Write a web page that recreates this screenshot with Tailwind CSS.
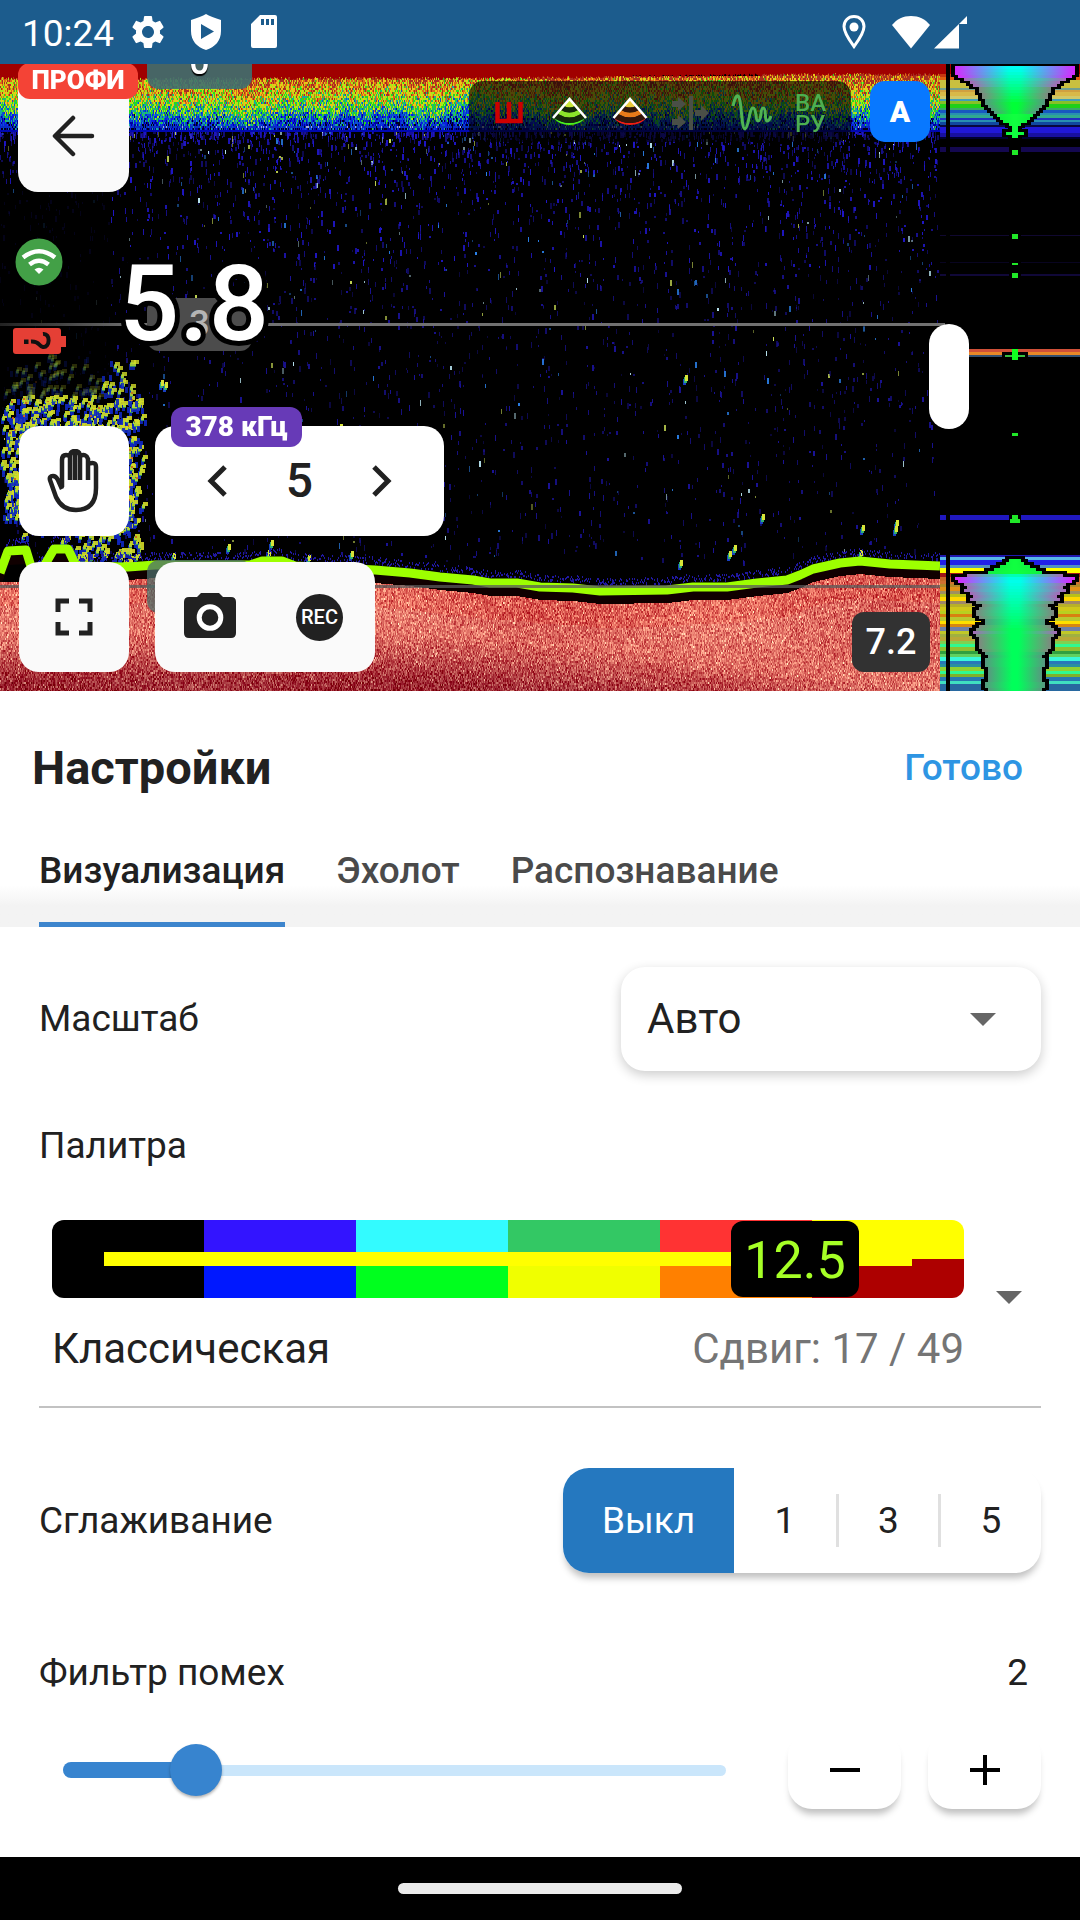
<!DOCTYPE html>
<html lang="ru">
<head>
<meta charset="utf-8">
<meta name="viewport" content="width=device-width, initial-scale=1">
<title>Настройки эхолота</title>
<script src="https://cdn.jsdelivr.net/npm/@tailwindcss/browser@4"></script>
</head>
<body class="flex min-h-screen flex-col bg-white font-['Roboto',sans-serif] text-[#212121]">

<header class="flex h-16 items-center justify-between bg-[#1c5c8d] pt-0 pr-[112px] pl-[22px] text-white">
  <div class="flex items-center">
    <span class="pt-1 text-[37px] leading-15">10:24</span>
    <svg class="ml-[14px] size-[40px]" viewBox="0 0 24 24" fill="currentColor"><path d="M19.14 12.94c.04-.3.06-.61.06-.94 0-.32-.02-.64-.07-.94l2.03-1.58a.49.49 0 0 0 .12-.61l-1.92-3.32a.488.488 0 0 0-.59-.22l-2.39.96c-.5-.38-1.03-.7-1.62-.94l-.36-2.54a.484.484 0 0 0-.48-.41h-3.84c-.24 0-.43.17-.47.41l-.36 2.54c-.59.24-1.13.57-1.62.94l-2.39-.96c-.22-.08-.47 0-.59.22L2.74 8.87c-.12.21-.08.47.12.61l2.03 1.58c-.05.3-.09.63-.09.94s.02.64.07.94l-2.03 1.58a.49.49 0 0 0-.12.61l1.92 3.32c.12.22.37.29.59.22l2.39-.96c.5.38 1.03.7 1.62.94l.36 2.54c.05.24.24.41.48.41h3.84c.24 0 .44-.17.47-.41l.36-2.54c.59-.24 1.13-.56 1.62-.94l2.39.96c.22.08.47 0 .59-.22l1.92-3.32c.12-.22.07-.47-.12-.61zM12 15.6A3.61 3.61 0 0 1 8.400 12c0-1.980 1.620-3.600 3.600-3.600s3.600 1.620 3.600 3.600-1.620 3.600-3.600 3.600z"/></svg>
    <svg class="ml-[22px] h-[36px] w-[32px]" viewBox="0 0 32 36" fill="currentColor" fill-rule="evenodd"><path d="M16 0C19 2 25 4 31 6V17C31 27 25 33 16 36 7 33 1 27 1 17V6C7 4 13 2 16 0ZM11 10V25L24 17.500Z"/></svg>
    <svg class="ml-[28px] h-[34px] w-[28px]" viewBox="0 0 28 34" fill="currentColor" fill-rule="evenodd"><path d="M10 0H25Q27 0 27 2V31Q27 33 25 33H3Q1 33 1 31V9ZM11 4V10H14V4ZM16 4V10H19V4ZM21 4V10H24V4Z"/></svg>
  </div>
  <div class="flex items-center">
    <svg class="h-[34px] w-[24px]" viewBox="0 0 24 34" fill="none"><path d="M12 1.500C6 1.500 2 6 2 11.500 2 18 8 26 12 31.500 16 26 22 18 22 11.500 22 6 18 1.500 12 1.500Z" stroke="#fff" stroke-width="3"/><circle cx="12" cy="12" r="4.500" fill="#fff"/></svg>
    <svg class="ml-[25px] h-[34px] w-[40px]" viewBox="0 0 40 34" fill="currentColor"><path d="M20 33.500 1 10C6 4 12 1 20 1S34 4 39 10Z"/></svg>
    <svg class="ml-[3px] h-[34px] w-[34px]" viewBox="0 0 34 34" fill="currentColor"><path d="M0 33.500 25 9V33.500ZM25 9 33 1V9Z"/></svg>
  </div>
</header>

<section class="relative h-[627px] overflow-hidden bg-black" aria-label="Эхограмма">
  <canvas id="sonar" class="block h-full w-full" width="1080" height="627"></canvas>

  <div class="absolute -top-7 left-[147px] h-[53px] w-[105px] rounded-xl bg-[#3d7070]/90 text-center text-4xl leading-[53px] text-white [text-shadow:0_2px_1px_#000]"><span class="font-medium">0</span></div>
  <div class="absolute top-[234px] left-[147px] h-[53px] w-[105px] rounded-xl bg-[#4c4c4c] text-center text-4xl leading-[53px] font-medium text-[#b5b5b5]">3</div>

  <button class="absolute top-0 left-[18px] flex h-32 w-[111px] items-center justify-center rounded-[20px] bg-[#fafafa] pt-4" aria-label="Назад">
    <svg class="h-11 w-11" viewBox="0 0 44 44" fill="none" stroke="#212121" stroke-width="4.500" stroke-linecap="round" stroke-linejoin="round"><path d="M40 22H4M21 4 3 22l18 18"/></svg>
  </button>
  <span class="absolute -top-px left-[18px] flex h-9 w-30 items-center justify-center rounded-xl bg-[#f44336] pb-0.5 text-[26px] leading-9 font-black text-white">ПРОФИ</span>

  <svg class="absolute top-[174px] left-[15px] size-12" viewBox="0 0 48 48"><circle cx="24" cy="24" r="23.500" fill="#43a047"/><g fill="none" stroke="#fff" stroke-width="4.500"><path d="M8 19.500Q24 7 40 19.500M14.500 26.500Q24 19 33.500 26.500"/></g><path d="M24 36 19.500 31.500Q24 28 28.500 31.500Z" fill="#fff"/></svg>
  <svg class="absolute top-[264px] left-[12px] h-7 w-[54px]" viewBox="0 0 54 28"><path d="M4 0H46Q49 0 49 3V8H54V19H49V23Q49 26 46 26H4Q1 26 1 23V3Q1 0 4 0Z" fill="#e53f35"/><path d="M31 6C39 5 38 20 31 19 26 18 28 13 19 13.500" fill="none" stroke="#111" stroke-width="4"/><path d="M12 11.500h4.500v4.500h-4.500z" fill="#111"/></svg>

  <div class="absolute top-[184px] left-[119px] text-[106px] leading-[112px] font-medium text-white [-webkit-text-stroke:10px_#000] [paint-order:stroke_fill]">5.8</div>

  <button class="absolute top-[362px] left-[19px] flex size-[110px] items-center justify-center rounded-[20px] bg-white" aria-label="Пауза прокрутки">
    <svg class="size-16" viewBox="0 0 64 64" fill="none" stroke="#212121" stroke-width="4.500" stroke-linejoin="round" stroke-linecap="butt"><path d="M20 38V11Q20 6 24 6 27 6 28 8V31M28 8Q28 2 33 2 38 2 38 8V31M33 3V31M38 7Q44 4 46 10V31M46 15Q54 12 54 18V39Q54 61 34 61 20 61 14 48L8 31Q7 27 11 27 14 27 16 31L20 40"/></svg>
  </button>
  <div class="absolute top-[362px] left-[155px] flex h-[110px] w-[289px] items-center justify-between rounded-[20px] bg-white px-[48px]">
    <button aria-label="Предыдущий"><svg class="h-8 w-7" viewBox="0 0 28 32" fill="none" stroke="#212121" stroke-width="5"><path d="M22 2 8 16 22 30"/></svg></button>
    <span class="text-5xl font-medium">5</span>
    <button aria-label="Следующий"><svg class="h-8 w-7" viewBox="0 0 28 32" fill="none" stroke="#212121" stroke-width="5"><path d="M6 2 20 16 6 30"/></svg></button>
  </div>
  <span class="absolute top-[343px] left-[171px] flex h-10 w-[131px] items-center justify-center rounded-xl bg-[#673ab7] text-[28px] leading-10 font-black text-white">378 кГц</span>

  <button class="absolute top-[498px] left-[19px] flex size-[110px] items-center justify-center rounded-[20px] bg-[#fafafa]" aria-label="Во весь экран">
    <svg class="size-[38px]" viewBox="0 0 38 38" fill="none" stroke="#212121" stroke-width="5"><path d="M3 14V3H14M24 3H35V14M35 24V35H24M14 35H3V24"/></svg>
  </button>
  <div class="absolute top-[498px] left-[155px] flex h-[110px] w-[220px] items-center justify-between rounded-[20px] bg-[#fafafa] pr-8 pl-7">
    <button aria-label="Снимок"><svg class="h-12 w-[54px]" viewBox="0 2 54 48"><path d="M6 6H14L19 1H35L40 6H48Q53 6 53 11V42Q53 47 48 47H6Q1 47 1 42V11Q1 6 6 6Z" fill="#212121"/><circle cx="27" cy="26.500" r="10.800" fill="none" stroke="#fff" stroke-width="5"/></svg></button>
    <button class="flex size-[47px] items-center justify-center rounded-full bg-[#212121] text-xl font-medium text-white">REC</button>
  </div>

  <div class="absolute top-[17px] right-[229px] h-[61px] w-[382px] rounded-[14px] bg-black/65">
    <svg class="h-full w-full" viewBox="0 0 382 61" fill="none">
      <path d="M28.500 21V40H51.500V21M40 21V40" stroke="#cc0000" stroke-width="4.500"/>
      <path d="M100.500 18 95 25Q100.500 28 106 25Z" fill="#c8e53a"/><path d="M92 29Q100.500 34 109 29L112 33Q100.500 40 89 33Z" fill="#8be52a"/><path d="M85 37Q100.500 47 116 37 111 44 100.500 44 90 44 85 37Z" fill="#4bf01d"/>
      <path d="M95 25Q100.500 28 106 25L109 29Q100.500 34 92 29ZM89 33Q100.500 40 112 33L116 37Q100.500 47 85 37Z" fill="#14280a"/>
      <path d="M84 37 100.500 18 117 37" stroke="#fff" stroke-width="2.500"/>
      <path d="M161 18 155 25Q161 28 167 25Z" fill="#e8c83a"/><path d="M152 29Q161 34 170 29L173 33Q161 40 149 33Z" fill="#e87a1a"/><path d="M145 37Q161 47 177 37 172 44 161 44 150 44 145 37Z" fill="#f01e12"/>
      <path d="M155 25Q161 28 167 25L170 29Q161 34 152 29ZM149 33Q161 40 173 33L177 37Q161 47 145 37Z" fill="#33150a"/>
      <path d="M144.500 37 161 18 177.500 37" stroke="#fff" stroke-width="2.500"/>
      <path d="M220 15h4v34h-4zM203 20h6v-4l8 7-8 7v-4h-6zM203 38h6v-4l8 7-8 7v-4h-6zM226 29h6v-5l8 8-8 8v-5h-6z" fill="#4a4f47"/>
      <path d="M264 25C266 16 269 10 271 20 273 32 273 48 276 48 280 47 280 27 284 27 288 27 286 40 289 40 293 40 291 27 294 27 298 27 295 39 298 40 300 40 301 38 302 35" stroke="#4fb353" stroke-width="3"/>
    </svg>
    <div class="absolute top-[12px] left-[326px] text-2xl leading-[21px] font-medium text-[#4caf50]"><p>ВА</p><p>РУ</p></div>
  </div>
  <button class="absolute top-[17px] right-[150px] h-[61px] w-[60px] rounded-[15px] bg-[#0878ff] text-3xl font-black text-white">A</button>
  <button class="absolute top-[260px] right-[111px] h-[105px] w-10 rounded-full bg-white" aria-label="Изменить ширину панели"></button>
  <div class="absolute right-[150px] bottom-[19px] h-[60px] w-[78px] rounded-xl bg-[#323232] text-center text-4xl leading-[60px] font-medium text-white">7.2</div>
</section>

<main class="flex grow flex-col">
  <div class="flex h-[152px] items-center justify-between pt-0.5 pr-[57px] pl-8">
    <h1 class="text-[47px] font-bold">Настройки</h1>
    <button class="text-[37px] font-medium text-[#2e95e3]">Готово</button>
  </div>
  <div role="tablist" class="flex h-[84px] gap-[51px] bg-linear-to-b from-white from-50% to-[#f3f3f3] to-75% px-[39px] text-[37px] leading-[56px] font-medium">
    <button role="tab" aria-selected="true" class="flex items-start border-b-5 border-[#3d85cd]">Визуализация</button>
    <button role="tab" aria-selected="false" class="flex items-start text-[#4a4a4a]">Эхолот</button>
    <button role="tab" aria-selected="false" class="flex items-start text-[#4a4a4a]">Распознавание</button>
  </div>

  <form class="flex flex-col px-[39px] pt-10 pb-12 text-[37px] leading-[50px]">
    <div class="flex items-center justify-between">
      <label for="scale">Масштаб</label>
      <div class="relative">
        <select id="scale" class="block h-[104px] w-[420px] appearance-none rounded-3xl bg-white pr-16 pl-[26px] text-[42px] shadow-[0_4px_12px_rgba(0,0,0,0.2)]"><option>Авто</option></select>
        <svg class="pointer-events-none absolute top-[46px] right-[45px] h-[13px] w-[26px]" viewBox="0 0 26 13" fill="#666"><path d="M0 0H26L13 13Z"/></svg>
      </div>
    </div>

    <p id="palette-label" class="mt-[50px]">Палитра</p>
    <button type="button" aria-labelledby="palette-label palette-name" class="mt-[49px] flex items-center gap-8 border-b-2 border-[#c2c2c2] pr-[19px] pb-8 pl-[13px] text-left">
      <span class="grow">
        <span class="relative block">
          <span class="grid h-[78px] grid-cols-6 grid-rows-2 overflow-hidden rounded-xl">
            <span class="bg-black"></span><span class="bg-[#3314ff]"></span><span class="bg-[#33fbff]"></span><span class="bg-[#33c864]"></span><span class="bg-[#ff3333]"></span><span class="bg-[#ffff00]"></span>
            <span class="bg-black"></span><span class="bg-[#0018ff]"></span><span class="bg-[#00ff1e]"></span><span class="bg-[#f0ff00]"></span><span class="bg-[#ff8000]"></span><span class="bg-[#ad0000]"></span>
          </span>
          <span class="absolute top-8 right-[52px] left-[52px] h-[14px] bg-[#ffff00]"></span>
          <span class="absolute top-px right-[105px] h-[76px] w-32 rounded-xl bg-black text-center text-[52px] leading-[80px] text-[#a6ff26]">12.5</span>
        </span>
        <span class="mt-[26px] flex justify-between text-[42px] leading-[50px]"><span id="palette-name">Классическая</span><span class="text-[#757575]">Сдвиг: 17 / 49</span></span>
      </span>
      <svg class="h-[13px] w-[26px] shrink-0" viewBox="0 0 26 13" fill="#666"><path d="M0 0H26L13 13Z"/></svg>
    </button>

    <div role="radiogroup" aria-labelledby="smooth-label" class="mt-[60px] flex items-center justify-between">
      <span id="smooth-label">Сглаживание</span>
      <div class="flex h-[105px] items-center overflow-hidden rounded-[26px] bg-white text-center shadow-[0_7px_7px_-2px_rgba(0,0,0,0.25)]">
        <label class="w-[171px] leading-[106px] text-white has-checked:bg-[#2578bf]"><input class="sr-only" type="radio" name="smooth" checked>Выкл</label>
        <label class="w-[102px]"><input class="sr-only" type="radio" name="smooth">1</label>
        <label class="w-[105px] border-x-3 border-[#e0e0e0] leading-[53px]"><input class="sr-only" type="radio" name="smooth">3</label>
        <label class="w-[100px]"><input class="sr-only" type="radio" name="smooth">5</label>
      </div>
    </div>

    <div class="mt-[75px] flex justify-between pr-[13px]">
      <label for="noise">Фильтр помех</label>
      <output for="noise">2</output>
    </div>
    <div class="mt-[33px] flex items-center">
      <div class="relative mr-9 -ml-0.5 flex h-[78px] grow items-center">
        <div class="absolute right-[26px] left-[26px] h-[11px] rounded-full bg-[#cae6fb]"></div>
        <div class="absolute left-[26px] h-4 w-1/5 rounded-full bg-[#3784cf]"></div>
        <input id="noise" type="range" min="0" max="10" value="2" class="relative h-[52px] w-full appearance-none bg-transparent [&::-webkit-slider-thumb]:size-[52px] [&::-webkit-slider-thumb]:appearance-none [&::-webkit-slider-thumb]:rounded-full [&::-webkit-slider-thumb]:bg-[#3784cf] [&::-webkit-slider-thumb]:shadow-[0_2px_3px_rgba(0,0,0,0.3)]">
      </div>
      <button type="button" aria-label="Уменьшить" class="flex h-[78px] w-[113px] items-center justify-center rounded-3xl bg-white shadow-[0_8px_7px_-3px_rgba(0,0,0,0.25)]"><svg class="size-[30px]" viewBox="0 0 30 30" stroke="#000" stroke-width="4"><path d="M0 15H30"/></svg></button>
      <button type="button" aria-label="Увеличить" class="ml-[27px] flex h-[78px] w-[113px] items-center justify-center rounded-3xl bg-white shadow-[0_8px_7px_-3px_rgba(0,0,0,0.25)]"><svg class="size-[30px]" viewBox="0 0 30 30" stroke="#000" stroke-width="4"><path d="M0 15H30M15 0V30"/></svg></button>
    </div>
  </form>
</main>

<footer class="flex h-[63px] items-center justify-center bg-black"><div class="h-[11px] w-[284px] rounded-full bg-[#ebebeb]"></div></footer>

<script>
const ctx = document.getElementById('sonar').getContext('2d');
ctx.translate(0, -64);
let seed = 12345;
const rnd = () => { seed = (seed * 1664525 + 1013904223) >>> 0; return seed / 4294967296; };
const rect = (c, x, y, w, h) => { ctx.fillStyle = c; ctx.fillRect(x, y, w, h); };
const lerp = (pts, v) => {
  for (let i = 1; i < pts.length; i++) if (v <= pts[i][0]) {
    const [a, b] = pts[i - 1], [c, d] = pts[i];
    return b + (d - b) * (v - a) / (c - a || 1);
  }
  return pts[pts.length - 1][1];
};
rect('#000', 0, 64, 1080, 627);

// Surface clutter: dark red through yellow and green down to blue
const ramp = ['#00001c', '#0000a0', '#0a20e0', '#0a50d0', '#18a8a0', '#28d820', '#a8e818', '#e8c818', '#e06818', '#a83020'];
let env = 0;
for (let x = 0; x < 940; x++) {
  if (x % 5 === 0) env = env * 0.7 + (rnd() - 0.5) * 8;
  const top = x < 500 ? 77 : 77 - Math.min(1, (x - 500) / 300) * 4;
  for (let y = 76 - (x > 760 ? 4 : 0); y < 132; y += 2) {
    const mean = lerp([[74, 8.6], [88, 7.4], [100, 6], [110, 4.8], [118, 3], [126, 1.8], [132, 0.8]], y - env);
    const v = Math.max(0, Math.min(9, Math.round(mean + (rnd() + rnd() - 1) * 3.4)));
    rect(ramp[v], x, y, 1, 2);
  }
  if (rnd() < 0.8) rect(rnd() < 0.12 ? '#a0a8d8' : '#0830c0', x, 126, 1, 2);
  rect('#0008b0', x, 130, 1, 2);
  rect('#a00000', x, 64, 1, top - 64 + rnd() * 3);
}
// Suspended speckles that thin out with depth
for (let i = 0; i < 4200; i++) {
  const x = rnd() * 938, y = 132 + Math.pow(rnd(), 2.4) * 430;
  const near = y < 270;
  ctx.globalAlpha = x < 110 && y > 190 && y < 410 ? 0.12 : 0.35 + rnd() * 0.65;
  const r = rnd();
  rect(r < 0.91 ? (near ? '#2016c8' : '#1a1298') : r < 0.955 ? '#2a80e8' : r < 0.98 ? '#b8e4f0' : '#d0e458', x | 0, y | 0, rnd() < 0.35 ? 2 : 1, 2 + (rnd() * 5 | 0));
}
ctx.globalAlpha = 1;
// Dense cloud along the left edge
for (let i = 0; i < 1500; i++) {
  const x = rnd() * 132 + rnd() * 14, y = 345 + rnd() * 217;
  if (x < 75 && y > 515 && rnd() < 0.8) continue;
  if (y > 520 && rnd() < 0.5) continue;
  if (y < 405 && rnd() > (y - 345) / 75) continue;
  ctx.globalAlpha = y < 395 ? (x > 100 ? 0.8 : 0.2) : 0.9;
  rect('#1028c0', (x | 0) - 1, (y | 0) + 4, 3, 6);
  if (rnd() < 0.6) { rect('#38a060', x | 0, (y | 0) + 2, 3, 5); rect('#d4dc28', (x | 0) + 1, y | 0, 5, 4); rect('#b8d830', x | 0, (y | 0) + 3, 3, 3); }
  if (rnd() < 0.08) rect('#d06018', (x | 0) + 1, (y | 0) + 2, 2, 2);
}
ctx.globalAlpha = 1;
[[685, 375], [762, 514], [734, 545], [729, 551], [680, 560], [862, 525], [860, 550], [896, 520], [895, 526], [340, 424], [271, 540], [268, 550], [228, 544], [173, 553], [308, 555], [351, 551], [161, 380], [165, 382]].forEach(([x, y]) => {
  rect('#1840c0', x - 2, y + 4, 3, 6); rect('#30b070', x - 1, y + 2, 3, 6); rect('#d8e438', x, y, 3, 6);
});

// Bottom profile
const bed = [[0, 573], [8, 551], [26, 550], [33, 573], [44, 566], [54, 549], [68, 549], [76, 566], [128, 567], [155, 565], [250, 565], [262, 561], [282, 561], [295, 566], [375, 570], [410, 573], [440, 577], [473, 580], [490, 583], [517, 583], [540, 587], [573, 588], [600, 591], [667, 590], [693, 587], [727, 587], [757, 583], [787, 580], [800, 575], [813, 569], [840, 563], [860, 561], [890, 564], [940, 566]];
for (let x = 0; x < 940; x++) {
  const b = lerp(bed, x), dark = lerp([[0, 652], [440, 652], [620, 668], [780, 690], [940, 700]], x);
  for (let n = 0; n < 3; n++) if (rnd() < 0.35) rect('#2018a0', x, (b - 6 - rnd() * 7) | 0, 1, 2);
  rect('#100000', x, b, 1, 14);
  const start = x < 80 ? 582 : Math.round(b + 13);
  for (let y = start; y < 691; y += 2) {
    const d = Math.max(0, Math.min(1, (y - dark + 18) / 48));
    const patch = Math.sin(x / 55 + 1) * Math.sin(y / 30) * 14;
    const shade = (rnd() + rnd() - 1) * 85 + patch + (rnd() < 0.06 ? 65 : 0);
    const first = y - start < 24 ? 12 : 0;
    const r = 222 - d * 65 + shade * 0.6, g = 108 - d * 70 + shade - first, bl = 98 - d * 48 + shade * 0.75 - first;
    rect(`rgb(${r | 0},${Math.max(0, g) | 0},${Math.max(5, bl) | 0})`, x, y, 1, 2);
  }
}
ctx.strokeStyle = '#9dff00'; ctx.lineWidth = 9; ctx.lineJoin = 'round';
ctx.beginPath(); bed.forEach(([x, y], i) => i ? ctx.lineTo(x, y) : ctx.moveTo(x, y)); ctx.stroke();
const line = ctx.createLinearGradient(0, 0, 140, 0);
line.addColorStop(0, '#222'); line.addColorStop(1, '#717171');
rect(line, 0, 323, 945, 3);
rect('rgba(90,90,90,0.75)', 0, 585, 945, 3);
ctx.fillStyle = 'rgba(75,110,105,0.75)';
ctx.beginPath(); ctx.roundRect(147, 560, 105, 53, 12); ctx.fill();

// Live echo column: [y, height, colour]
const bands = [[64, 10, '#a80000'], [74, 3, '#c83810'], [77, 3, '#e06010'], [80, 8, '#c8c040'], [88, 2, '#70a090'], [90, 2, '#d0a040'], [92, 4, '#d8b848'], [96, 3, '#d0c868'], [99, 2, '#40a0b8'], [101, 3, '#88c028'], [104, 4, '#20d018'], [108, 2, '#38a868'], [110, 3, '#1858c0'], [113, 2, '#2890b0'], [115, 3, '#30a890'], [118, 2, '#2030c0'], [120, 2, '#2890b0'], [122, 3, '#1048a0'], [125, 2, '#080840'], [127, 6, '#2018d8'], [133, 4, '#1810a0'], [137, 2, '#000030'], [147, 5, '#140850'], [235, 1, '#100830'], [262, 1, '#080420'], [274, 2, '#100838'], [349, 3, '#d05038'], [352, 3, '#e88828'], [355, 2, '#345070'], [515, 5, '#2018c0'], [555, 2, '#2018b0'], [557, 3, '#58b8e8'], [560, 5, '#2020e8'], [565, 3, '#5090c0'], [568, 5, '#ffff00'], [573, 4, '#a01818']];
bands.forEach(([y, h, c]) => rect(c, 940, y, 140, h));
rect('#000', 940, 349, 10, 8);
const low = ['#c86828', '#d07030', '#b08828', '#e09018', '#a09060', '#b8c018', '#ffd800', '#a08868', '#b8b028', '#d0c818', '#b8d020', '#d88010', '#b8c830', '#ffe000', '#d88810', '#7080a8', '#c0c828', '#a0b040', '#b8a838', '#80d050', '#30f890', '#90c030', '#30a040', '#60d060', '#38f8d8', '#2878b8', '#2890a0', '#90d030', '#30f890', '#80b028', '#2878b0', '#40e0c0', '#2868a0'];
for (let y = 577, i = 0; y < 691; i++) { const h = 3 + (i % 3 === 0); rect(low[Math.min(i, low.length - 1)], 940, y, 140, h); y += h; }
rect('#000', 946, 64, 4, 627);

function echo(shape, from, to) {
  const upper = from < 200;
  for (let y = from; y < to; y += 3) {
    const w = Math.round(lerp(shape, y) / 3) * 3;
    rect('#000', 1015 - w - 4, y - 3, w * 2 + 8, 8);
  }
  for (let y = from; y < to; y += 3) {
    const w = Math.round(lerp(shape, y) / 3) * 3;
    const t = upper ? Math.min(1, (y - 64) / 38) : Math.min(1, Math.abs(y - 578) / (y < 578 ? 10 : 50));
    const edge = w > 51 ? '#d828ff' : w > 40 ? '#a868b8' : w > 30 ? '#808880' : '#589880';
    const mid = `rgb(0,255,${Math.round(upper ? 255 - t * 200 : 240 - t * 150)})`;
    const g = ctx.createLinearGradient(1015 - Math.max(w, 12), 0, 1015 + Math.max(w, 12), 0);
    const plain = w < 20 || (!upper && y < 574);
    g.addColorStop(0, plain ? '#10f040' : edge);
    g.addColorStop(0.45, plain ? '#10ff40' : mid);
    g.addColorStop(0.55, plain ? '#10ff40' : mid);
    g.addColorStop(1, plain ? '#10f040' : edge);
    rect(g, 1015 - w, y, w * 2, 3);
  }
}
echo([[66, 60], [74, 60], [77, 52], [82, 43], [86, 38], [91, 34], [100, 31], [105, 26], [112, 21], [117, 15], [121, 9], [125, 3], [129, 3], [130, 10], [133, 10], [134, 3], [139, 3]], 66, 138);
echo([[556, 3], [560, 5], [564, 14], [568, 22], [572, 27], [575, 57], [578, 60], [581, 54], [586, 48], [590, 50], [594, 42], [598, 44], [604, 34], [610, 40], [616, 35], [621, 29], [625, 36], [632, 42], [638, 34], [645, 36], [651, 32], [654, 26], [660, 32], [666, 28], [680, 27], [685, 31], [691, 23]], 559, 691);
[[150, 5], [234, 5], [263, 2], [273, 5], [433, 3], [515, 5]].forEach(([y, h]) => { rect('#000', 1009, y - 3, 12, h + 6); rect('#20e828', 1012, y, 6, h); });
rect('#20e828', 1010, 519, 10, 4);
rect('#000', 1002, 352, 26, 7);
rect('#38c040', 1005, 355, 20, 2);
rect('#10ff20', 1012, 349, 6, 11);
</script>
</body>
</html>
